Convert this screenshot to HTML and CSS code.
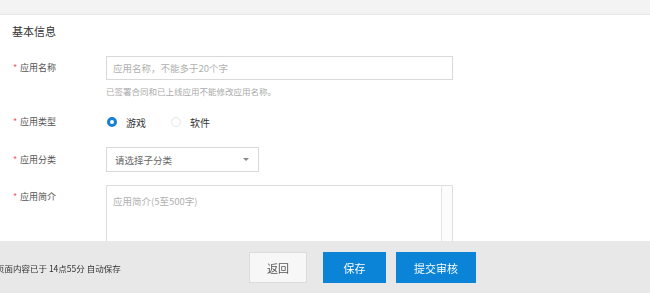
FILE: index.html
```html
<!DOCTYPE html>
<html lang="zh-CN">
<head>
<meta charset="utf-8">
<link rel="stylesheet" href="styles.css">
</head>
<body>
<div class="topbar"></div>
<div class="form">
  <div class="title">基本信息</div>

  <div class="row row-name">
    <div class="label"><span class="req">*</span>应用名称</div>
    <div class="control">
      <div class="input"><span class="ph">应用名称，不能多于20个字</span></div>
      <div class="hint">已签署合同和已上线应用不能修改应用名称。</div>
    </div>
  </div>

  <div class="row row-type">
    <div class="label"><span class="req">*</span>应用类型</div>
    <div class="control radios">
      <label class="radio"><span class="dot on"></span><span class="rtext">游戏</span></label>
      <label class="radio"><span class="dot"></span><span class="rtext">软件</span></label>
    </div>
  </div>

  <div class="row row-cat">
    <div class="label"><span class="req">*</span>应用分类</div>
    <div class="control">
      <div class="select"><span class="sel-text">请选择子分类</span><span class="caret"></span></div>
    </div>
  </div>

  <div class="row row-desc">
    <div class="label"><span class="req">*</span>应用简介</div>
    <div class="control">
      <div class="textarea"><div class="ta-body"><span class="ph">应用简介(5至500字)</span></div><div class="ta-track"></div></div>
    </div>
  </div>
</div>

<div class="footer">
  <div class="autosave">页面内容已于 14点55分 自动保存</div>
  <div class="actions">
    <button class="btn btn-back">返回</button>
    <button class="btn btn-primary btn-save">保存</button>
    <button class="btn btn-primary btn-submit">提交审核</button>
  </div>
</div>
</body>
</html>
```

FILE: styles.css
```css
* { box-sizing: border-box; }
html, body { margin: 0; padding: 0; }
body {
  width: 650px;
  height: 293px;
  overflow: hidden;
  background: #fff;
  font-family: "Noto Sans CJK SC", "Noto Sans", sans-serif;
  color: #333;
}
.topbar {
  height: 15px;
  background: #f3f3f3;
  border-bottom: 1px solid #e6e6e6;
}
.form {
  padding-left: 12px;
}
.title {
  margin-top: 8px;
  height: 16px;
  line-height: 16px;
  font-size: 11px;
  color: #333;
}
.row {
  display: grid;
  grid-template-columns: 94px 1fr;
  align-items: start;
}
.row-name { margin-top: 17px; }
.row-type { margin-top: 15px; }
.row-cat { margin-top: 15px; }
.row-desc { margin-top: 13px; }
.label {
  height: 24px;
  line-height: 24px;
  font-size: 9px;
  color: #555;
  display: flex;
  align-items: center;
}
.req {
  color: #e8606a;
  font-size: 9px;
  width: 8px;
  padding-left: 1px;
}
.input {
  width: 347px;
  height: 24px;
  border: 1px solid #d9d9d9;
  padding-left: 6px;
  display: flex;
  align-items: center;
}
.ph {
  font-size: 9.5px;
  color: #b0b0b0;
}
.hint {
  margin-top: 5px;
  height: 12px;
  line-height: 12px;
  font-size: 8.5px;
  color: #aaa;
}
.radios {
  display: flex;
  align-items: center;
  height: 20px;
  padding-left: 1px;
}
.radio {
  display: flex;
  align-items: center;
  margin-right: 25px;
}
.dot {
  width: 10px;
  height: 10px;
  border-radius: 50%;
  border: 1px solid #e6e6e6;
  background: #fff;
}
.dot.on {
  border: 3px solid #1580d6;
}
.rtext {
  margin-left: 9px;
  font-size: 10px;
  color: #333;
}
.row-type .label { height: 20px; line-height: 20px; }
.select {
  width: 153px;
  height: 25px;
  border: 1px solid #d9d9d9;
  padding: 0 9px 0 8px;
  display: flex;
  align-items: center;
  justify-content: space-between;
}
.sel-text {
  font-size: 9.5px;
  color: #666;
}
.caret {
  width: 0;
  height: 0;
  border-left: 3px solid transparent;
  border-right: 3px solid transparent;
  border-top: 3px solid #888;
}
.row-cat .label { height: 25px; line-height: 25px; }
.textarea {
  width: 347px;
  height: 100px;
  border: 1px solid #dedede;
  display: flex;
}
.ta-body {
  flex: 1;
  padding: 5px 6px;
  line-height: 14px;
}
.ta-track {
  width: 11px;
  border-left: 1px solid #e4e4e4;
  background: #fcfcfc;
}
.footer {
  position: fixed;
  left: 0;
  right: 0;
  bottom: 0;
  height: 52px;
  background: #e8e8e8;
  display: flex;
  align-items: center;
}
.autosave {
  width: 249px;
  margin-left: -4px;
  font-size: 8.5px;
  color: #333;
  padding-top: 2px;
}
.actions {
  display: flex;
  align-items: center;
  margin-left: 4px;
  margin-top: 1px;
}
.btn {
  height: 31px;
  border: 1px solid #dcdcdc;
  font-family: inherit;
  font-size: 11px;
  padding: 0;
  cursor: pointer;
}
.btn-back {
  width: 58px;
  background: #f7f7f7;
  color: #555;
}
.btn-primary {
  background: #0b84d8;
  border-color: #0b84d8;
  color: #fff;
}
.btn-save {
  width: 63px;
  margin-left: 16px;
}
.btn-submit {
  width: 80px;
  margin-left: 10px;
}
```
